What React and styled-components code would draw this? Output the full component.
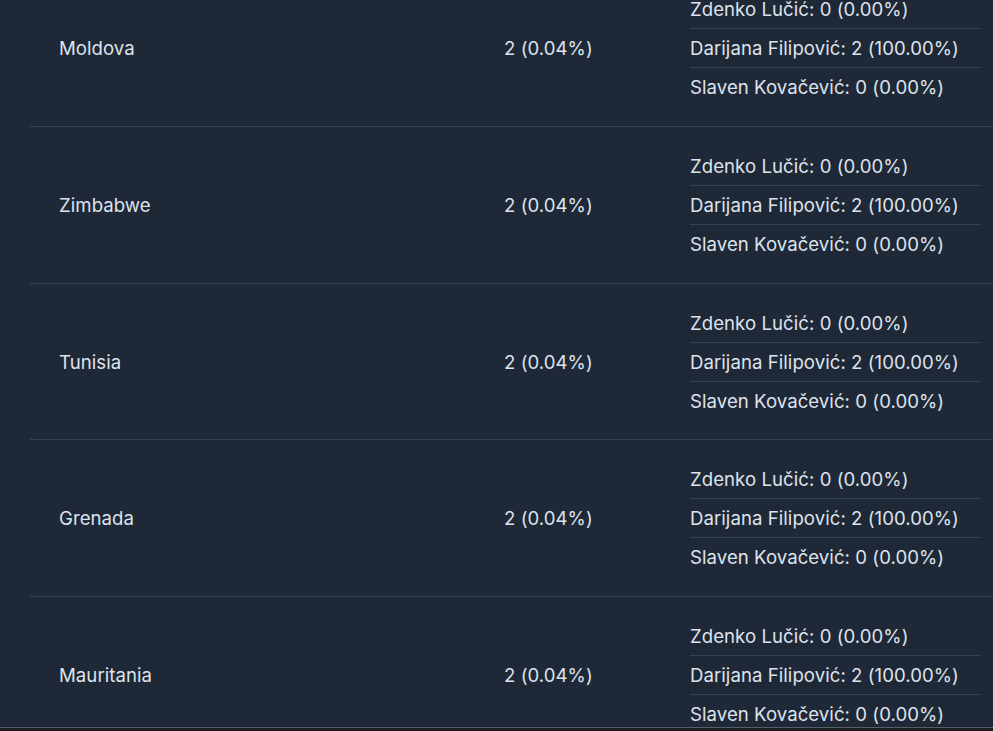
import styled, { createGlobalStyle } from "styled-components";

const GlobalStyle = createGlobalStyle`
  html, body {
    margin: 0;
    padding: 0;
    background: #1f2836;
    overflow: hidden;
  }
  body {
    font-family: Inter, "Noto Sans", sans-serif;
    color: #dde3ec;
  }
`;

const Page = styled.div`
  height: 731px;
  display: flex;
  flex-direction: column;
  background: #1f2836;
  overflow: hidden;
`;

const Viewport = styled.div`
  flex: 1;
  overflow: hidden;
`;

// scrolled list, first row is partly above the top edge
const Table = styled.div`
  margin-top: -29.6px;
  margin-left: 30px;
`;

const Row = styled.div`
  display: grid;
  grid-template-columns: 444px 186px 1fr;
  align-items: center;
  padding: 19.85px 12px 19.85px 0;
  border-bottom: 1px solid #374151;
  font-size: 18.6px;
  line-height: 24px;
  letter-spacing: 0.05px;
`;

const Cell = styled.div`
  padding-left: ${(p) => (p.$first ? "29px" : "30px")};
`;

const List = styled.ul`
  list-style: none;
  margin: 0;
  padding: 0 0 0 30px;
`;

const Item = styled.li`
  padding: 7px 0;
  white-space: nowrap;
  & + & {
    border-top: 1px solid #374151;
  }
`;

const BottomBar = styled.div`
  height: 3px;
  border-top: 1px solid #5a5f66;
  background: #1b1b1d;
`;

const people = [
  ["Zdenko Lučić", "0 (0.00%)"],
  ["Darijana Filipović", "2 (100.00%)"],
  ["Slaven Kovačević", "0 (0.00%)"],
];

const countries = ["Moldova", "Zimbabwe", "Tunisia", "Grenada", "Mauritania"];

export default function App() {
  return (
    <Page>
      <GlobalStyle />
      <Viewport>
        <Table>
          {countries.map((c) => (
            <Row key={c}>
              <Cell $first>{c}</Cell>
              <Cell>2 (0.04%)</Cell>
              <List>
                {people.map(([name, val]) => (
                  <Item key={name}>
                    {name}: {val}
                  </Item>
                ))}
              </List>
            </Row>
          ))}
        </Table>
      </Viewport>
      <BottomBar />
    </Page>
  );
}
